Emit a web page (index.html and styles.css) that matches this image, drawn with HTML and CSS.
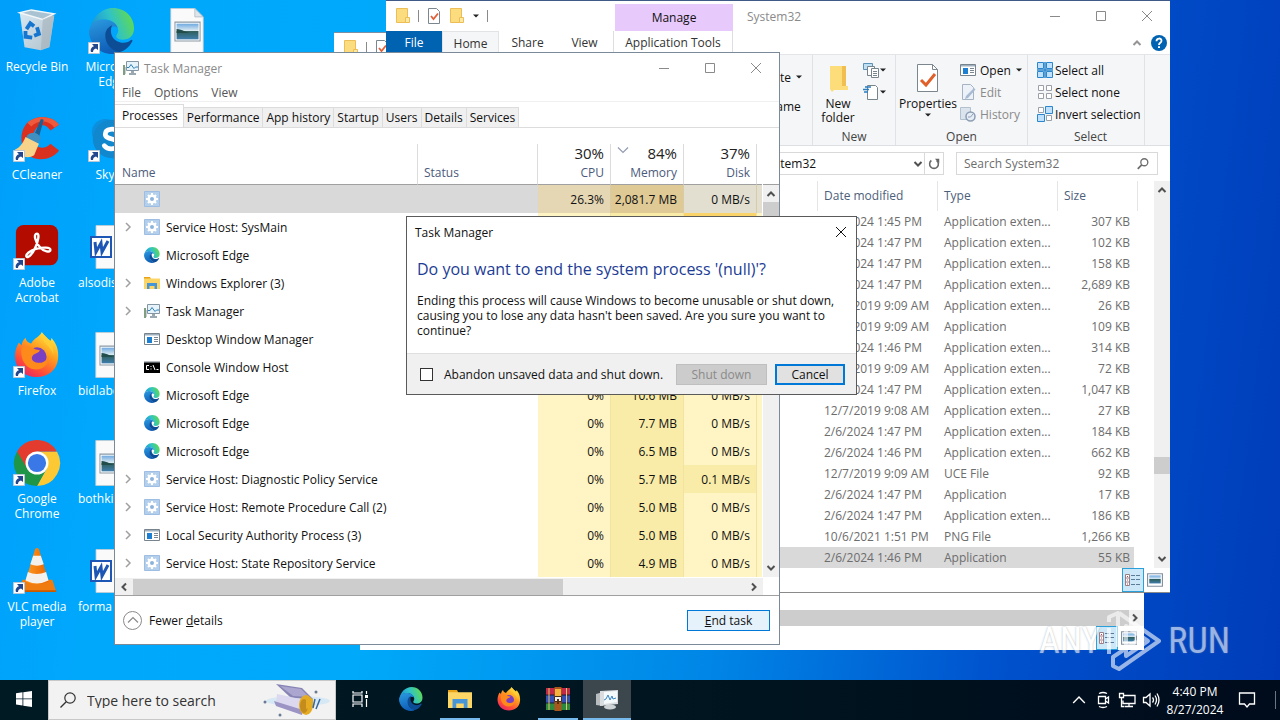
FILE: index.html
```
<!DOCTYPE html>
<html lang="en">
  <head>
    <meta charset="UTF-8" />
    <meta name="viewport" content="width=device-width, initial-scale=1" />
    <title>Task Manager</title>
    <link rel="stylesheet" href="styles.css">
  </head>
  <body>
    <!-- icon sprite -->
    <svg class="sprite" aria-hidden="true">
      <defs>
        <linearGradient id="g_edge_top" x1="0" y1="0.6" x2="1" y2="0.3">
          <stop offset="0" stop-color="#1b8fd6" /><stop offset="0.5" stop-color="#2fc2c8" /><stop offset="1" stop-color="#62dc4c" />
        </linearGradient>
        <linearGradient id="g_edge_left" x1="0" y1="0" x2="0.3" y2="1">
          <stop offset="0" stop-color="#2b9be0" /><stop offset="1" stop-color="#0f5fb8" />
        </linearGradient>
        <linearGradient id="g_fox" x1="0.8" y1="0" x2="0.2" y2="1">
          <stop offset="0" stop-color="#fff044" /><stop offset="0.4" stop-color="#ff9a1f" /><stop offset="0.75" stop-color="#ff4a3a" /><stop offset="1" stop-color="#e3206e" />
        </linearGradient>
        <linearGradient id="g_bin" x1="0" y1="0" x2="1" y2="1">
          <stop offset="0" stop-color="#e3ecf2" /><stop offset="1" stop-color="#b9c3ca" />
        </linearGradient>
        <linearGradient id="g_photo" x1="0" y1="0" x2="0" y2="1">
          <stop offset="0" stop-color="#6fa9e0" /><stop offset="0.45" stop-color="#dcebf2" /><stop offset="0.5" stop-color="#2f5f5c" /><stop offset="1" stop-color="#3f7fae" />
        </linearGradient>
        <linearGradient id="g_orange" x1="0" y1="0" x2="1" y2="0">
          <stop offset="0" stop-color="#ff9a20" /><stop offset="1" stop-color="#e86400" />
        </linearGradient>
      </defs>
      <symbol id="i_edge" viewBox="0 0 48 48">
        <path fill="url(#g_edge_top)" d="M1 23C3 10 13 0 25 0c13 0 22 10 22 21 0 8-5 12-12 12-5 0-8-2-6-5 2-3 2-6 0-9-3-5-8-7-14-7-7 0-12 5-14 11z" />
        <path fill="url(#g_edge_left)" d="M0 24c2-9 8-12 15-12 8 0 14 4 15 9-5-4-11 0-12 7-1 9 6 17 15 17-3 2-6 3-9 3C11 48 0 37 0 24z" />
        <path fill="#0d4d96" d="M17 29c0-6 3-9 7-11-3 8 0 16 9 18 5 1 9-1 11-3 1 0 2 1 1 2-3 6-8 10-13 11-8-1-15-8-15-17z" />
      </symbol>
      <symbol id="i_shortcut" viewBox="0 0 12 12">
        <path fill="#fff" stroke="#b9c7d6" d="M.5.5h11v11H.5z" />
        <path fill="#23478d" d="M4 2h6v6L8 6.500C6 7 5 8 5 10H3C2 7.500 3.500 5 6 4.300z" />
      </symbol>
      <symbol id="i_bin" viewBox="0 0 48 48">
        <path fill="url(#g_bin)" d="M6 5l36 3-5 33-9 3-17-3z" opacity="0.95" />
        <path fill="#a9c3d3" stroke="#f2f6f8" stroke-width="1.500" d="M6 5l12-3 24 4-12 6z" />
        <path fill="#a4b0b9" d="M30 12l12-5-5 33-9 4z" opacity="0.6" />
        <g fill="none" stroke="#1676cf" stroke-width="4">
          <path d="M13 22l4-6 4 3" /><path d="M24 20l2 7-5 2" /><path d="M19 31l-7-1 0-6" />
        </g>
      </symbol>
      <symbol id="i_photo_file" viewBox="0 0 32 44">
        <path fill="#fafafa" stroke="#c4ccd2" stroke-width="0.800" d="M.5.5h23l8 8v35H.5z" />
        <path fill="#dfe6ea" stroke="#b0bcc4" stroke-width="0.800" d="M23.500.5v8h8z" />
        <path fill="#fff" stroke="#8a9aa6" d="M4.500 13.500h24v18h-24z" />
        <path fill="url(#g_photo)" d="M6 15h21v15H6z" />
        <path fill="#214d4b" d="M6 20c6 0 8 4 15 4H6z" />
      </symbol>
      <symbol id="i_word_file" viewBox="0 0 48 44">
        <path fill="#fafafa" stroke="#c4ccd2" stroke-width="0.800" d="M8 .5h24l8 8v35H8z" />
        <path stroke="#9eb0c4" d="M27 14h10M27 18h10M27 22h10M27 26h10M27 30h10" />
        <path fill="#fff" stroke="#1d56b4" stroke-width="2" d="M3 12h20v20H3z" />
        <path fill="none" stroke="#1d56b4" stroke-width="3" d="M7 17l1 10 5-9 1 9 6-11" />
      </symbol>
      <symbol id="i_ccleaner" viewBox="0 0 48 48">
        <path fill="#d9301f" d="M47 9C40-1 22-1 14 7 5 16 6 34 15 41c9 7 25 5 32-5l-9-7c-5 6-13 5-16 0-3-6-2-13 2-17 5-4 10-3 14 3z" />
        <path fill="#f05a3c" d="M47 9C40-1 22-1 14 7l4 4C25 4 36 4 42 12z" />
        <path fill="#1c5f92" d="M28 3l3 1-5 18-5-2z" />
        <path fill="#3f8fc0" d="M14 20c5-4 11-3 14 3l-3 6-13-4z" />
        <path fill="#f8d38a" d="M12 22l14 7-5 12c-6 4-15 2-20-6 5-2 8-6 11-13z" />
      </symbol>
      <symbol id="i_skype" viewBox="0 0 48 48">
        <circle cx="17" cy="17" r="14" fill="#0c8fdc" /><circle cx="31" cy="31" r="14" fill="#0a7ccb" />
        <circle cx="24" cy="24" r="20" fill="#1187ce" />
        <path fill="none" stroke="#fff" stroke-width="5" stroke-linecap="round" d="M31 17c-4-5-14-4-14 2s14 4 14 10-11 7-15 2" />
      </symbol>
      <symbol id="i_acrobat" viewBox="0 0 48 48">
        <rect x="2" y="1" width="44" height="42" rx="8" fill="#b30b00" />
        <path fill="none" stroke="#fff" stroke-width="2.500" d="M24 10c-4 0-2 9 3 14 4 5 11 6 11 3s-8-3-15-1-11 6-10 8 6-2 9-9c3-6 5-15 2-15z" />
      </symbol>
      <symbol id="i_firefox" viewBox="0 0 48 48">
        <path fill="url(#g_fox)" d="M29 0c3 4 6 7 9 9 1-1 1-2 1-3 5 6 8 12 7 22C45 40 35 47 24 47 11 47 1 38 1 25c0-6 2-10 4-14l3 3c0-3 2-6 4-8 1 4 3 5 6 6 3-6 9-7 11-12z" />
        <circle cx="24" cy="26" r="10" fill="#7b3fc4" />
        <path fill="#ff8a1c" d="M8 17c4-3 10-2 14 1l5 1c-1 3-5 3-7 5-3 3-1 8 5 8 6 1 9-3 11-7 1 8-5 14-13 14C13 39 6 29 8 17z" />
        <path fill="#ffcf35" d="M29 1c8 6 13 14 12 23-1-5-5-9-8-12-3-4-5-7-4-11z" opacity="0.800" />
      </symbol>
      <symbol id="i_chrome" viewBox="0 0 48 48">
        <path fill="#fcc934" d="M34 30L24 48a24 24 0 0 0 20.800-36H24z" />
        <path fill="#1e9547" d="M3.200 12A24 24 0 0 0 24 48l10-18-10-6z" />
        <path fill="#e33b2e" d="M3.200 12A24 24 0 0 1 44.800 12H24l-10 18z" />
        <circle cx="24" cy="24" r="12" fill="#fff" /><circle cx="24" cy="24" r="9.500" fill="#3b78e7" />
      </symbol>
      <symbol id="i_vlc" viewBox="0 0 48 48">
        <path fill="#f07c10" d="M9 33h31l4 13H3z" /><path fill="#c85a00" d="M3 44h41v2H3z" />
        <path fill="url(#g_orange)" d="M22 1q2-2 4 0l10 34q-12 6-24 0z" />
        <path fill="#f4f1ec" d="M20 8h8l3 9q-7 3-14 0z" />
        <path fill="#f4f1ec" d="M14.500 25q9 4 19 0l2.500 9q-12 6-24 0z" />
      </symbol>
      <symbol id="i_gear" viewBox="0 0 16 16">
        <path fill="#b4cfec" stroke="#9dbde2" d="M.5.500h15v15H.5z" />
        <path stroke="#fff" stroke-width="2" d="M8 2v12M2 8h12M4 4l8 8M12 4l-8 8" />
        <circle cx="8" cy="8" r="4.500" fill="#fff" />
        <circle cx="8" cy="8" r="2" fill="#8db2dc" />
      </symbol>
      <symbol id="i_explorer" viewBox="0 0 16 16">
        <path fill="#e8a317" d="M0 2h6l1 2H0z" /><path fill="#fbd667" d="M0 3.500h16V14H0z" />
        <path fill="#4795d9" d="M3 8h10v6h-2.500v-3h-5v3H3z" />
      </symbol>
      <symbol id="i_taskmgr" viewBox="0 0 16 16">
        <path fill="#e6f3fb" stroke="#8496a3" d="M3.500 1.500h12v9h-12z" />
        <path fill="none" stroke="#2f81b5" d="M4 7.500h2l2-3 3 4 1.500-1.500H15" />
        <path fill="#9aa8b2" d="M8 11h3v2h2v2H6v-2h2z" /><path fill="#7f9f80" d="M0 5h2v10H0z" /><path fill="#c7cdd2" d="M2 7h1v7H2z" />
      </symbol>
      <symbol id="i_app" viewBox="0 0 16 16">
        <path fill="#fff" stroke="#77838d" d="M.5 2.500h15v11H.5z" /><path fill="#9fb0bc" d="M1 3h14v1.500H1z" />
        <path fill="#1c7fd2" d="M3 6h5v6H3z" /><path stroke="#7a8790" d="M10 6.500h4M10 8.500h4M10 10.500h4" />
      </symbol>
      <symbol id="i_console" viewBox="0 0 16 16">
        <path fill="#000" d="M0 2h16v12H0z" /><path fill="#b9bec2" d="M0 2h16v1.500H0z" />
        <path fill="none" stroke="#fff" d="M5 6.500H2.500v4H5M7 7v1M7 9.500v1M9 6l2 5M12.500 10.500h2" />
      </symbol>
      <symbol id="i_chev_right" viewBox="0 0 12 12"><path fill="none" stroke="#a0a0a0" stroke-width="1.500" d="M4 2l4 4-4 4" /></symbol>
      <symbol id="i_arrow" viewBox="0 0 12 12"><path fill="none" stroke="#505050" stroke-width="2" d="M2.500 8L6 4.500 9.500 8" /></symbol>
      <symbol id="i_arrow_thin" viewBox="0 0 12 12"><path fill="none" stroke="currentColor" stroke-width="1.200" d="M1 8.500L6 3.500 11 8.500" /></symbol>
      <symbol id="i_min" viewBox="0 0 12 12"><path stroke="currentColor" d="M1 6.500h10" /></symbol>
      <symbol id="i_max" viewBox="0 0 12 12"><path fill="none" stroke="currentColor" d="M1.500 1.500h9v9h-9z" /></symbol>
      <symbol id="i_close" viewBox="0 0 12 12"><path stroke="currentColor" d="M1 1l10 10M11 1L1 11" /></symbol>
      <symbol id="i_caret" viewBox="0 0 8 8"><path fill="#222" d="M1 2.500h6L4 5.500z" /></symbol>
      <symbol id="i_qa_folder" viewBox="0 0 16 16"><path fill="#fbdc7e" stroke="#edbe55" d="M1.500.5h11v14h-11z" /><path fill="#fde9a6" stroke="#edbe55" d="M10.500 9.500h4v5h-4z" /></symbol>
      <symbol id="i_qa_check" viewBox="0 0 16 16"><path fill="#fff" stroke="#7b868e" d="M2.500.5h8l3 3v12h-11z" /><path fill="none" stroke="#e0603a" stroke-width="1.800" d="M5 8l2.500 3L12 5.500" /></symbol>
      <symbol id="i_big_folder" viewBox="0 0 24 30"><path fill="#f0bf4f" d="M8 3h12v20H6z" /><path fill="#fddc7a" d="M4 3h12v20h6v4H8l-2 2-2-3z" /></symbol>
      <symbol id="i_big_check" viewBox="0 0 24 30"><path fill="#fff" stroke="#7b868e" d="M1.500 1.500h15l5 5v22h-20z" /><path fill="none" stroke="#7b868e" d="M16.500 1.500v5h5" /><path fill="none" stroke="#e0602a" stroke-width="3" d="M5 17l5 5 9-11" /></symbol>
      <symbol id="i_new_item" viewBox="0 0 16 16"><path fill="#bfe0f5" stroke="#5d91b5" d="M.5 1.500h9v6h-9z" /><path fill="#fff" stroke="#78848c" d="M4.500 4.500h7v9h-7z" /><path fill="#fff" stroke="#78848c" d="M8.500 6.500h7v9h-7z" /><path stroke="#78848c" d="M10 9.500h4M10 11.500h4M10 13.500h4" /></symbol>
      <symbol id="i_easy" viewBox="0 0 16 16"><path fill="#fff" stroke="#78848c" d="M4.500 1.500h8l2 2v12h-10z" /><path stroke="#2a7ec4" stroke-width="1.500" d="M2 3h6M0 5.500h6M1 8h4" /></symbol>
      <symbol id="i_edit" viewBox="0 0 16 16"><path fill="#edf2f8" stroke="#a6b3c2" d="M2.500.5h8l3 3v12h-11z" /><path fill="#a9bbd3" d="M14 4l1.500 1.500L8 14l-3 1 1-3z" /></symbol>
      <symbol id="i_history" viewBox="0 0 16 16"><path fill="#dbe3ed" stroke="#b3c0cf" d="M.5 1.500h10v12H.5z" /><circle cx="10.500" cy="10.500" r="4.500" fill="#e6edf5" stroke="#8c9db4" stroke-width="1.500" /><path fill="none" stroke="#8c9db4" d="M10.500 11l2.500-3M10.500 11H8" /></symbol>
      <symbol id="i_sel_all" viewBox="0 0 16 16"><path fill="#bfe1fb" stroke="#2b86cd" d="M.5.5h6v6h-6zM9.500.5h6v6h-6zM.5 9.500h6v6h-6zM9.500 9.500h6v6h-6z" /><path stroke="#2b86cd" stroke-width="1.500" d="M8 0v16M0 8h16" /></symbol>
      <symbol id="i_sel_none" viewBox="0 0 16 16"><path fill="#fff" stroke="#9aa0a5" d="M1.500 1.500h5v5h-5zM9.500 1.500h5v5h-5zM1.500 9.500h5v5h-5zM9.500 9.500h5v5h-5z" /></symbol>
      <symbol id="i_sel_inv" viewBox="0 0 16 16"><path fill="#fff" stroke="#9aa0a5" d="M1.500 1.500h5v5h-5zM9.500 9.500h5v5h-5z" /><path fill="#bfe1fb" stroke="#2b86cd" d="M8.500.5h7v7h-7zM.5 8.500h7v7h-7z" /></symbol>
      <symbol id="i_search" viewBox="0 0 16 16"><circle cx="9.500" cy="6" r="4" fill="none" stroke="currentColor" stroke-width="1.500" /><path stroke="currentColor" stroke-width="2" d="M6.500 9L2 13.500" /></symbol>
      <symbol id="i_search_thin" viewBox="0 0 16 16"><circle cx="10" cy="6" r="5.200" fill="none" stroke="currentColor" stroke-width="1.200" /><path stroke="currentColor" stroke-width="1.300" d="M6.200 9.800L.5 15.500" /></symbol>
      <symbol id="i_refresh" viewBox="0 0 16 16"><path fill="none" stroke="#666" stroke-width="1.800" d="M5 4a5 5 0 1 0 6 0" /><path fill="#666" d="M9 2h5v5z" /></symbol>
      <symbol id="i_help" viewBox="0 0 16 16"><circle cx="8" cy="8" r="8" fill="#0063b1" /><path fill="none" stroke="#fff" stroke-width="1.800" d="M5.500 6.200c0-3.500 5-3.500 5-.4C10.500 8 8 7.600 8 10" /><path fill="#fff" d="M7 11.200h2v1.800H7z" /></symbol>
      <symbol id="i_view_list" viewBox="0 0 16 14"><path fill="#fff" stroke="#9a7f86" d="M.5 1.500h4v11h-4zM.5 5h4M.5 9h4" /><path stroke="#5b7b96" stroke-dasharray="4 1" d="M6 2.500h10M6 6.500h10M6 11.500h10" /><path fill="#c34242" d="M2 3h1v1H2zM2 6.500h1v1H2zM2 10.500h1v1H2z" /></symbol>
      <symbol id="i_view_pic" viewBox="0 0 14 12"><path fill="#fff" stroke="#8391a0" d="M.5.5h13v11H.5z" /><path fill="url(#g_photo)" d="M2 2h10v7H2z" /></symbol>
      <symbol id="i_start" viewBox="0 0 16 16"><path fill="#fff" d="M0 2.200l6.500-.9v6.200H0zM7.300 1.200L16 0v7.500H7.300zM0 8.300h6.500v6.200L0 13.600zM7.300 8.300H16V16l-8.700-1.200z" /></symbol>
      <symbol id="i_taskview" viewBox="0 0 18 18"><path fill="none" stroke="#fff" stroke-width="1.200" d="M2 5h9v7H2zM2 1v2h9V1M2 17v-3h9v3M15.500 1v3M15.500 9v8" /><path fill="#fff" d="M14 5h3v3h-3z" /></symbol>
      <symbol id="i_winrar" viewBox="0 0 24 24"><path fill="#c02a48" d="M0 1h24v7H0z" /><path fill="#3551b5" d="M0 8h24v8H0z" /><path fill="#2c8a3e" d="M0 16h24v7H0z" /><path stroke="#1c1c30" d="M0 8h24M0 16h24" /><path stroke="#e4c66c" d="M3 1v22M20.500 1v22" /><path fill="#a8561c" d="M8.500 0h7v24h-7z" /><path fill="#f3b23c" d="M9 2h6v8H9z" /><path fill="#eee" stroke="#4a2a10" d="M8.500 9.500h7v5h-7z" /><path fill="#553010" d="M11 12h2v5h-2z" /></symbol>
      <symbol id="i_tm_bar" viewBox="0 0 24 24"><path fill="#b8bdbf" d="M1 7l7-2v14l-7-1z" /><path fill="#d9dddf" d="M5 4l18-1v14l-18 2z" /><path fill="#f4f9fc" d="M9 5l13-1v11l-13 2z" /><path fill="none" stroke="#3a86c4" d="M9 13l2-1 2-4 2 5 2-4 1 3 3-1" /><ellipse cx="15" cy="20" rx="6" ry="2.500" fill="#cdd2d5" /></symbol>
      <symbol id="i_satellite" viewBox="0 0 68 34">
        <ellipse cx="35" cy="18" rx="32" ry="5" fill="#c4e1f6" opacity="0.600" />
        <path fill="#8784b4" d="M13 1l26 4 11 11-22-1z" /><path fill="#aaa6cf" d="M17 3l21 3 8 8-16-1z" />
        <path fill="#dcd8ef" d="M14 11l28 6-2 13-27-9z" /><path fill="#9b94c4" d="M11 18l29 9-1 5-26-9z" />
        <ellipse cx="43" cy="22" rx="7" ry="10" fill="#e5ab22" /><ellipse cx="41" cy="23" rx="4" ry="7" fill="#c48c1c" />
        <path fill="#e5ab22" d="M43 14l7 2v8l-7 2z" /><path stroke="#34679f" stroke-width="1.500" d="M52 16l-2 9M57 16l-4 10" />
        <circle cx="2" cy="19" r="1.500" fill="#697a95" /><circle cx="17" cy="32" r="1.500" fill="#697a95" /><circle cx="53" cy="9" r="1.500" fill="#697a95" />
      </symbol>
      <symbol id="i_camera" viewBox="0 0 18 18"><path fill="none" stroke="#fff" stroke-width="1.300" d="M4.500 5.500h7v7h-7zM11.500 8l3-2v6l-3-2M5 2.500q4-2 8 0M5 15.500q4 2 8 0" /></symbol>
      <symbol id="i_network" viewBox="0 0 18 18"><path fill="none" stroke="#fff" stroke-width="1.300" d="M6 4.500h11v8H5v-3M11 12.500v3M7 15.500h8M1.500 2.500h4v4h-4zM3.500 6.500v9h3" /></symbol>
      <symbol id="i_volume" viewBox="0 0 18 18"><path fill="none" stroke="#fff" stroke-width="1.300" d="M1.500 6.500h2.500L8 3v12l-4-3.500H1.500zM10.500 6.500q2 2.500 0 5M13 4.500q3 4.500 0 9M15 2.500q4 6.500 0 13" /></symbol>
      <symbol id="i_note" viewBox="0 0 18 18"><path fill="none" stroke="#fff" stroke-width="1.300" d="M1.500 2h15v11h-5L9 16l-2.500-3h-5z" /></symbol>
    </svg>

    <main class="desktop">
      <ul class="shortcuts">
        <li class="shortcut"><svg class="shortcut__icon"><use href="#i_bin" /></svg><span>Recycle Bin</span></li>
        <li class="shortcut"><svg class="shortcut__icon"><use href="#i_ccleaner" /></svg><svg class="shortcut__arrow"><use href="#i_shortcut" /></svg><span>CCleaner</span></li>
        <li class="shortcut"><svg class="shortcut__icon"><use href="#i_acrobat" /></svg><svg class="shortcut__arrow"><use href="#i_shortcut" /></svg><span>Adobe<br />Acrobat</span></li>
        <li class="shortcut"><svg class="shortcut__icon"><use href="#i_firefox" /></svg><svg class="shortcut__arrow"><use href="#i_shortcut" /></svg><span>Firefox</span></li>
        <li class="shortcut"><svg class="shortcut__icon"><use href="#i_chrome" /></svg><svg class="shortcut__arrow"><use href="#i_shortcut" /></svg><span>Google<br />Chrome</span></li>
        <li class="shortcut"><svg class="shortcut__icon"><use href="#i_vlc" /></svg><svg class="shortcut__arrow"><use href="#i_shortcut" /></svg><span>VLC media<br />player</span></li>
        <li class="shortcut"><svg class="shortcut__icon"><use href="#i_edge" /></svg><svg class="shortcut__arrow"><use href="#i_shortcut" /></svg><span>Microsoft<br />Edge</span></li>
        <li class="shortcut"><svg class="shortcut__icon"><use href="#i_skype" /></svg><svg class="shortcut__arrow"><use href="#i_shortcut" /></svg><span>Skype</span></li>
        <li class="shortcut shortcut--file"><svg class="shortcut__icon"><use href="#i_word_file" /></svg><span>alsodis</span></li>
        <li class="shortcut shortcut--file"><svg class="shortcut__icon"><use href="#i_photo_file" /></svg><span>bidlabe</span></li>
        <li class="shortcut shortcut--file"><svg class="shortcut__icon"><use href="#i_photo_file" /></svg><span>bothki</span></li>
        <li class="shortcut shortcut--file"><svg class="shortcut__icon"><use href="#i_word_file" /></svg><span>forma</span></li>
        <li class="shortcut"><svg class="shortcut__icon"><use href="#i_photo_file" /></svg></li>
      </ul>

      <!-- windows in the background -->
      <section class="window window--back1">
        <div class="quick_access">
          <svg class="icon16"><use href="#i_qa_folder" /></svg><i class="quick_access__bar"></i>
          <svg class="icon16"><use href="#i_qa_check" /></svg>
        </div>
      </section>
      <section class="window window--back2">
        <div class="scroll_h"><span class="scroll_h__thumb"></span><svg class="scroll__arrow scroll__arrow--right"><use href="#i_arrow" /></svg></div>
        <div class="view_switch">
          <button class="view_switch__button view_switch__button--on" aria-label="Details"><svg class="view_icon"><use href="#i_view_list" /></svg></button>
          <button class="view_switch__button" aria-label="Large icons"><svg class="view_icon"><use href="#i_view_pic" /></svg></button>
        </div>
      </section>

      <!-- Explorer -->
      <section class="window explorer">
        <header class="explorer__title">
          <div class="quick_access">
            <svg class="icon16"><use href="#i_qa_folder" /></svg><i class="quick_access__bar"></i>
            <svg class="icon16"><use href="#i_qa_check" /></svg>
            <svg class="icon16"><use href="#i_qa_folder" /></svg>
            <svg class="caret"><use href="#i_caret" /></svg><i class="quick_access__bar"></i>
          </div>
          <span class="explorer__manage">Manage</span>
          <h2 class="explorer__name">System32</h2>
          <div class="caption">
            <button aria-label="Minimize"><svg><use href="#i_min" /></svg></button>
            <button aria-label="Maximize"><svg><use href="#i_max" /></svg></button>
            <button aria-label="Close"><svg><use href="#i_close" /></svg></button>
          </div>
        </header>
        <nav class="ribbon_tabs">
          <button class="ribbon_tabs__tab ribbon_tabs__tab--file">File</button>
          <button class="ribbon_tabs__tab ribbon_tabs__tab--on">Home</button>
          <button class="ribbon_tabs__tab">Share</button>
          <button class="ribbon_tabs__tab">View</button>
          <button class="ribbon_tabs__tab ribbon_tabs__tab--tools">Application Tools</button>
          <div class="ribbon_tabs__end">
            <svg class="scroll__arrow scroll__arrow--thin"><use href="#i_arrow" /></svg>
            <svg class="icon16"><use href="#i_help" /></svg>
          </div>
        </nav>
        <div class="ribbon">
          <div class="ribbon__group ribbon__group--organize">
            <div class="ribbon__stack">
              <button class="ribbon__small">Delete <svg class="caret"><use href="#i_caret" /></svg></button>
              <button class="ribbon__small">Rename</button>
            </div>
          </div>
          <div class="ribbon__group ribbon__group--new">
            <div class="ribbon__body">
              <button class="ribbon__big"><svg><use href="#i_big_folder" /></svg>New<br />folder</button>
              <div class="ribbon__col">
                <button class="ribbon__small ribbon__small--icon" aria-label="New item"><svg class="icon16"><use href="#i_new_item" /></svg><svg class="caret"><use href="#i_caret" /></svg></button>
                <button class="ribbon__small ribbon__small--icon" aria-label="Easy access"><svg class="icon16"><use href="#i_easy" /></svg><svg class="caret"><use href="#i_caret" /></svg></button>
              </div>
            </div>
            <p class="ribbon__label">New</p>
          </div>
          <div class="ribbon__group ribbon__group--open">
            <div class="ribbon__body">
              <button class="ribbon__big"><svg><use href="#i_big_check" /></svg>Properties<svg class="caret"><use href="#i_caret" /></svg></button>
              <div class="ribbon__col">
                <button class="ribbon__small"><svg class="icon16"><use href="#i_app" /></svg>Open <svg class="caret"><use href="#i_caret" /></svg></button>
                <button class="ribbon__small" disabled><svg class="icon16"><use href="#i_edit" /></svg>Edit</button>
                <button class="ribbon__small" disabled><svg class="icon16"><use href="#i_history" /></svg>History</button>
              </div>
            </div>
            <p class="ribbon__label">Open</p>
          </div>
          <div class="ribbon__group ribbon__group--select">
            <div class="ribbon__body">
              <div class="ribbon__col">
                <button class="ribbon__small"><svg class="icon16"><use href="#i_sel_all" /></svg>Select all</button>
                <button class="ribbon__small"><svg class="icon16"><use href="#i_sel_none" /></svg>Select none</button>
                <button class="ribbon__small"><svg class="icon16"><use href="#i_sel_inv" /></svg>Invert selection</button>
              </div>
            </div>
            <p class="ribbon__label">Select</p>
          </div>
        </div>
        <div class="address">
          <div class="address__path">
            <span class="address__text">System32</span>
            <svg class="scroll__arrow scroll__arrow--down"><use href="#i_arrow" /></svg>
            <button class="address__refresh" aria-label="Refresh"><svg class="icon14"><use href="#i_refresh" /></svg></button>
          </div>
          <label class="address__search">
            <input type="text" placeholder="Search System32" aria-label="Search System32" />
            <svg class="icon14"><use href="#i_search" /></svg>
          </label>
        </div>
        <div class="files">
          <table class="files__table">
            <thead>
              <tr><th></th><th class="files__date">Date modified</th><th class="files__type">Type</th><th class="files__size">Size</th></tr>
            </thead>
            <tbody>
              <tr><td></td><td>2/6/2024 1:45 PM</td><td>Application exten...</td><td>307 KB</td></tr>
              <tr><td></td><td>2/6/2024 1:47 PM</td><td>Application exten...</td><td>102 KB</td></tr>
              <tr><td></td><td>2/6/2024 1:47 PM</td><td>Application exten...</td><td>158 KB</td></tr>
              <tr><td></td><td>2/6/2024 1:47 PM</td><td>Application exten...</td><td>2,689 KB</td></tr>
              <tr><td></td><td>12/7/2019 9:09 AM</td><td>Application exten...</td><td>26 KB</td></tr>
              <tr><td></td><td>12/7/2019 9:09 AM</td><td>Application</td><td>109 KB</td></tr>
              <tr><td></td><td>2/6/2024 1:46 PM</td><td>Application exten...</td><td>314 KB</td></tr>
              <tr><td></td><td>12/7/2019 9:09 AM</td><td>Application exten...</td><td>72 KB</td></tr>
              <tr><td></td><td>2/6/2024 1:47 PM</td><td>Application exten...</td><td>1,047 KB</td></tr>
              <tr><td></td><td>12/7/2019 9:08 AM</td><td>Application exten...</td><td>27 KB</td></tr>
              <tr><td></td><td>2/6/2024 1:47 PM</td><td>Application exten...</td><td>184 KB</td></tr>
              <tr><td></td><td>2/6/2024 1:46 PM</td><td>Application exten...</td><td>662 KB</td></tr>
              <tr><td></td><td>12/7/2019 9:09 AM</td><td>UCE File</td><td>92 KB</td></tr>
              <tr><td></td><td>2/6/2024 1:47 PM</td><td>Application</td><td>17 KB</td></tr>
              <tr><td></td><td>2/6/2024 1:47 PM</td><td>Application exten...</td><td>186 KB</td></tr>
              <tr><td></td><td>10/6/2021 1:51 PM</td><td>PNG File</td><td>1,266 KB</td></tr>
              <tr class="files__selected"><td></td><td>2/6/2024 1:46 PM</td><td>Application</td><td>55 KB</td></tr>
            </tbody>
          </table>
          <div class="scroll_v scroll_v--files">
            <svg class="scroll__arrow"><use href="#i_arrow" /></svg>
            <span class="scroll_v__thumb"></span>
            <svg class="scroll__arrow scroll__arrow--down"><use href="#i_arrow" /></svg>
          </div>
        </div>
        <div class="view_switch">
          <button class="view_switch__button view_switch__button--on" aria-label="Details"><svg class="view_icon"><use href="#i_view_list" /></svg></button>
          <button class="view_switch__button" aria-label="Large icons"><svg class="view_icon"><use href="#i_view_pic" /></svg></button>
        </div>
      </section>

      <!-- Task Manager -->
      <section class="window taskmgr">
        <header class="taskmgr__title">
          <svg class="icon16"><use href="#i_taskmgr" /></svg>
          <h1 class="taskmgr__name">Task Manager</h1>
          <div class="caption">
            <button aria-label="Minimize"><svg><use href="#i_min" /></svg></button>
            <button aria-label="Maximize"><svg><use href="#i_max" /></svg></button>
            <button aria-label="Close"><svg><use href="#i_close" /></svg></button>
          </div>
        </header>
        <nav class="menu"><button>File</button><button>Options</button><button>View</button></nav>
        <nav class="tabs">
          <button class="tabs__tab tabs__tab--on">Processes</button>
          <button class="tabs__tab">Performance</button>
          <button class="tabs__tab">App history</button>
          <button class="tabs__tab">Startup</button>
          <button class="tabs__tab">Users</button>
          <button class="tabs__tab">Details</button>
          <button class="tabs__tab">Services</button>
        </nav>
        <div class="processes">
          <table class="processes__table">
            <colgroup><col /><col class="col_status" /><col class="col_value" /><col class="col_value" /><col class="col_value" /><col class="col_rest" /></colgroup>
            <thead>
              <tr>
                <th>Name</th>
                <th>Status</th>
                <th><strong>30%</strong>CPU</th>
                <th><svg class="sort"><use href="#i_arrow_thin" /></svg><strong>84%</strong>Memory</th>
                <th><strong>37%</strong>Disk</th>
                <th></th>
              </tr>
            </thead>
            <tbody>
              <tr class="processes__selected"><td><div class="proc"><i class="proc__open"></i><svg class="icon16"><use href="#i_gear" /></svg></div></td><td></td><td>26.3%</td><td>2,081.7 MB</td><td>0 MB/s</td><td></td></tr>
              <tr><td><div class="proc"><svg class="proc__open"><use href="#i_chev_right" /></svg><svg class="icon16"><use href="#i_gear" /></svg>Service Host: SysMain</div></td><td></td><td></td><td></td><td class="heat3"></td><td></td></tr>
              <tr><td><div class="proc"><i class="proc__open"></i><svg class="icon16"><use href="#i_edge" /></svg>Microsoft Edge</div></td><td></td><td></td><td></td><td></td><td></td></tr>
              <tr><td><div class="proc"><svg class="proc__open"><use href="#i_chev_right" /></svg><svg class="icon16"><use href="#i_explorer" /></svg>Windows Explorer (3)</div></td><td></td><td></td><td></td><td></td><td></td></tr>
              <tr><td><div class="proc"><svg class="proc__open"><use href="#i_chev_right" /></svg><svg class="icon16"><use href="#i_taskmgr" /></svg>Task Manager</div></td><td></td><td></td><td></td><td></td><td></td></tr>
              <tr><td><div class="proc"><i class="proc__open"></i><svg class="icon16"><use href="#i_app" /></svg>Desktop Window Manager</div></td><td></td><td></td><td></td><td></td><td></td></tr>
              <tr><td><div class="proc"><i class="proc__open"></i><svg class="icon16"><use href="#i_console" /></svg>Console Window Host</div></td><td></td><td></td><td></td><td></td><td></td></tr>
              <tr><td><div class="proc"><i class="proc__open"></i><svg class="icon16"><use href="#i_edge" /></svg>Microsoft Edge</div></td><td></td><td>0%</td><td>10.6 MB</td><td>0 MB/s</td><td></td></tr>
              <tr><td><div class="proc"><i class="proc__open"></i><svg class="icon16"><use href="#i_edge" /></svg>Microsoft Edge</div></td><td></td><td>0%</td><td>7.7 MB</td><td>0 MB/s</td><td></td></tr>
              <tr><td><div class="proc"><i class="proc__open"></i><svg class="icon16"><use href="#i_edge" /></svg>Microsoft Edge</div></td><td></td><td>0%</td><td>6.5 MB</td><td>0 MB/s</td><td></td></tr>
              <tr><td><div class="proc"><svg class="proc__open"><use href="#i_chev_right" /></svg><svg class="icon16"><use href="#i_gear" /></svg>Service Host: Diagnostic Policy Service</div></td><td></td><td>0%</td><td>5.7 MB</td><td class="heat2">0.1 MB/s</td><td></td></tr>
              <tr><td><div class="proc"><svg class="proc__open"><use href="#i_chev_right" /></svg><svg class="icon16"><use href="#i_gear" /></svg>Service Host: Remote Procedure Call (2)</div></td><td></td><td>0%</td><td>5.0 MB</td><td>0 MB/s</td><td></td></tr>
              <tr><td><div class="proc"><svg class="proc__open"><use href="#i_chev_right" /></svg><svg class="icon16"><use href="#i_app" /></svg>Local Security Authority Process (3)</div></td><td></td><td>0%</td><td>5.0 MB</td><td>0 MB/s</td><td></td></tr>
              <tr><td><div class="proc"><svg class="proc__open"><use href="#i_chev_right" /></svg><svg class="icon16"><use href="#i_gear" /></svg>Service Host: State Repository Service</div></td><td></td><td>0%</td><td>4.9 MB</td><td>0 MB/s</td><td></td></tr>
            </tbody>
          </table>
          <div class="scroll_v scroll_v--processes">
            <svg class="scroll__arrow"><use href="#i_arrow" /></svg>
            <span class="scroll_v__thumb"></span>
            <svg class="scroll__arrow scroll__arrow--down"><use href="#i_arrow" /></svg>
          </div>
        </div>
        <div class="scroll_h scroll_h--processes">
          <svg class="scroll__arrow scroll__arrow--left"><use href="#i_arrow" /></svg>
          <span class="scroll_h__thumb"></span>
          <svg class="scroll__arrow scroll__arrow--right"><use href="#i_arrow" /></svg>
        </div>
        <footer class="taskmgr__footer">
          <button class="fewer"><span class="fewer__circle"><svg class="scroll__arrow"><use href="#i_arrow_thin" /></svg></span><span>Fewer <u>d</u>etails</span></button>
          <button class="button button--hot"><span><u>E</u>nd task</span></button>
        </footer>
      </section>

      <!-- confirm dialog -->
      <section class="dialog" role="dialog" aria-labelledby="dialog_question">
        <header class="dialog__title">
          <span>Task Manager</span>
          <button class="dialog__close" aria-label="Close"><svg><use href="#i_close" /></svg></button>
        </header>
        <div class="dialog__body">
          <h2 id="dialog_question" class="dialog__question">Do you want to end the system process '(null)'?</h2>
          <p class="dialog__text">Ending this process will cause Windows to become unusable or shut down,<br />causing you to lose any data hasn't been saved. Are you sure you want to<br />continue?</p>
        </div>
        <footer class="dialog__footer">
          <label class="dialog__check"><input type="checkbox" />Abandon unsaved data and shut down.</label>
          <button class="button button--shutdown" disabled>Shut down</button>
          <button class="button button--focus">Cancel</button>
        </footer>
      </section>

      <div class="watermark">
        <span>ANY</span>
        <svg viewBox="0 0 58 62"><g fill="none" stroke="#fff" stroke-width="4" stroke-linejoin="round"><path d="M4 12v-5l9-4v34M4 18v26" /><path d="M14 3l40 28L14 59l-6-3 0-9 24-16" /><path d="M21 16v30l22-15z" /></g></svg>
        <span>RUN</span>
      </div>
    </main>

    <footer class="taskbar">
      <button class="taskbar__button" aria-label="Start"><svg class="icon16"><use href="#i_start" /></svg></button>
      <label class="taskbar__search">
        <svg class="taskbar__search_icon"><use href="#i_search_thin" /></svg>
        <input type="text" placeholder="Type here to search" aria-label="Type here to search" />
        <svg class="taskbar__art"><use href="#i_satellite" /></svg>
      </label>
      <button class="taskbar__button" aria-label="Task View"><svg class="icon18"><use href="#i_taskview" /></svg></button>
      <div class="taskbar__apps">
        <button class="taskbar__button" aria-label="Microsoft Edge"><svg class="icon24"><use href="#i_edge" /></svg></button>
        <button class="taskbar__button taskbar__button--open" aria-label="File Explorer"><svg class="icon24"><use href="#i_explorer" /></svg></button>
        <button class="taskbar__button" aria-label="Firefox"><svg class="icon24"><use href="#i_firefox" /></svg></button>
        <button class="taskbar__button taskbar__button--open" aria-label="WinRAR"><svg class="icon24"><use href="#i_winrar" /></svg></button>
        <button class="taskbar__button taskbar__button--active" aria-label="Task Manager"><svg class="icon24"><use href="#i_tm_bar" /></svg></button>
      </div>
      <div class="tray">
        <button aria-label="Show hidden icons"><svg class="icon14"><use href="#i_arrow_thin" /></svg></button>
        <button aria-label="Camera"><svg class="icon18"><use href="#i_camera" /></svg></button>
        <button aria-label="Network"><svg class="icon18"><use href="#i_network" /></svg></button>
        <button aria-label="Volume"><svg class="icon18"><use href="#i_volume" /></svg></button>
        <p class="tray__clock"><time>4:40 PM</time><time>8/27/2024</time></p>
        <button class="tray__note" aria-label="Notifications"><svg class="icon18"><use href="#i_note" /></svg></button>
      </div>
    </footer>
  </body>
</html>
```
FILE: styles.css
```
:root {
  --color-text: #111;
  --color-gray: #f0f0f0;
  --color-thumb: #cdcdcd;
  --color-blue: #0078d7;
  font-family: 'Open Sans', 'Noto Sans', sans-serif;
  font-size: 12px;
  line-height: 15px;
  color: var(--color-text);
}
* {
  margin: 0;
  padding: 0;
  box-sizing: border-box;
}
body {
  display: flex;
  flex-direction: column;
  height: 100vh;
  overflow: hidden;
}
button,
input {
  border: none;
  background: none;
  font: inherit;
  color: inherit;
}
svg {
  display: block;
  flex: none;
}
h1,
h2 {
  font-size: 12px;
  font-weight: 400;
}
table {
  border-spacing: 0;
  table-layout: fixed;
}
th {
  font-weight: 400;
  text-align: left;
}
.sprite {
  position: absolute;
  width: 0;
  height: 0;
}
.icon14 {
  width: 14px;
  height: 14px;
}
.icon16 {
  width: 16px;
  height: 16px;
}
.icon18 {
  width: 18px;
  height: 18px;
}
.icon24 {
  width: 24px;
  height: 24px;
}
.caret {
  width: 8px;
  height: 8px;
}
/* desktop */
.desktop {
  position: relative;
  flex: 1;
  overflow: hidden;
  background: linear-gradient(97deg, #009ffa 0%, #00a8fc 12%, #00a9fa 32%, #0086e6 58%, #0050cc 80%, #003cb9 100%);
}
.shortcuts {
  display: grid;
  grid-template-rows: repeat(6, 108px);
  grid-auto-flow: column;
  grid-auto-columns: 75px;
  list-style: none;
}
.shortcut {
  position: relative;
  display: flex;
  flex-direction: column;
  align-items: center;
  padding: 8px 4px 0 3px;
  text-align: center;
  color: #fff;
}
.shortcut__icon {
  width: 48px;
  height: 46px;
  margin-bottom: 5px;
}
.shortcut__arrow {
  position: absolute;
  left: 13px;
  top: 42px;
  width: 12px;
  height: 12px;
}
.shortcut--file {
  align-items: flex-start;
}
.shortcut--file .shortcut__icon {
  margin-left: 10px;
}
/* window frame */
.window {
  position: absolute;
  display: flex;
  flex-direction: column;
  background-color: #fff;
}
.window--back1 {
  left: 334px;
  top: 32px;
  right: 162px;
  bottom: 100px;
  border-top: 1px solid #7d8ea0;
}
.window--back2 {
  left: 360px;
  top: 80px;
  right: 136px;
  bottom: 30px;
  justify-content: flex-end;
}
.caption {
  display: flex;
  align-self: stretch;
  margin-left: auto;
  color: #8a8a8a;
}
.caption button {
  display: flex;
  align-items: center;
  justify-content: center;
  width: 46px;
}
.caption svg {
  width: 12px;
  height: 12px;
}
.quick_access {
  display: flex;
  align-items: center;
  gap: 7px;
  height: 30px;
  padding-left: 9px;
}
.quick_access__bar {
  width: 1px;
  height: 12px;
  background-color: #8a8a8a;
}
/* scrollbars */
.scroll__arrow {
  width: 12px;
  height: 12px;
}
.scroll__arrow--down {
  transform: rotate(180deg);
}
.scroll__arrow--left {
  transform: rotate(-90deg);
}
.scroll__arrow--right {
  transform: rotate(90deg);
}
.scroll__arrow--thin {
  opacity: 0.6;
}
.scroll_v {
  display: flex;
  flex-direction: column;
  align-items: center;
  width: 16px;
  padding: 3px 0;
  background-color: var(--color-gray);
}
.scroll_v__thumb {
  width: 16px;
  background-color: var(--color-thumb);
}
.scroll_v .scroll__arrow--down {
  margin-top: auto;
}
.scroll_h {
  display: flex;
  align-items: center;
  height: 16px;
  padding: 0 3px;
  background-color: var(--color-gray);
}
.scroll_h__thumb {
  flex: 1;
  height: 16px;
  background-color: var(--color-thumb);
}
.scroll_h .scroll__arrow--right {
  margin-left: auto;
}
.view_switch {
  display: flex;
  justify-content: flex-end;
  height: 24px;
  padding-right: 4px;
}
.view_switch__button {
  display: flex;
  align-items: center;
  justify-content: center;
  width: 22px;
}
.view_switch__button--on {
  border: 1px solid #2aa0da;
  background-color: #cce8f8;
}
.view_icon {
  width: 16px;
  height: 14px;
}
/* Explorer */
.explorer {
  left: 386px;
  top: 0;
  right: 110px;
  border-top: 1px solid #405a88;
  border-bottom: 1px solid #8a8a8a;
}
.explorer__title {
  display: flex;
  align-items: center;
  height: 30px;
}
.explorer__title .quick_access {
  width: 229px;
}
.explorer__manage {
  display: flex;
  align-items: center;
  justify-content: center;
  align-self: flex-end;
  width: 118px;
  height: 27px;
  background-color: #e8c9fb;
}
.explorer__name {
  margin-left: 14px;
  color: #8a8a8a;
}
.ribbon_tabs {
  display: flex;
  height: 23px;
}
.ribbon_tabs__tab {
  width: 57px;
  color: #333;
}
.ribbon_tabs__tab--file {
  width: 56px;
  background-color: #0063b1;
  color: #fff;
}
.ribbon_tabs__tab--on {
  border: 1px solid #e1e3e5;
  border-bottom: none;
  background-color: #f5f6f7;
}
.ribbon_tabs__tab--tools {
  width: 120px;
  border: solid #e0dce4;
  border-width: 0 1px;
}
.ribbon_tabs__end {
  display: flex;
  align-items: center;
  gap: 8px;
  margin-left: auto;
  padding-right: 3px;
}
.ribbon {
  display: flex;
  justify-content: flex-end;
  height: 92px;
  padding-right: 25px;
  border-top: 1px solid #e3e5e8;
  border-bottom: 1px solid #dcdfe3;
  background-color: #f5f6f7;
}
.ribbon__group {
  display: flex;
  flex-direction: column;
  justify-content: space-between;
  padding: 4px 0 1px;
  border-right: 1px solid #e0e2e5;
}
.ribbon__group--organize {
  padding-top: 11px;
  padding-right: 9px;
}
.ribbon__group--new {
  width: 83px;
}
.ribbon__group--open {
  width: 132px;
}
.ribbon__group--select {
  width: 117px;
  padding-left: 9px;
}
.ribbon__stack {
  display: flex;
  flex-direction: column;
  gap: 7px;
}
.ribbon__body {
  display: flex;
}
.ribbon__col {
  display: flex;
  flex-direction: column;
}
.ribbon__small {
  display: flex;
  align-items: center;
  gap: 4px;
  height: 22px;
  white-space: nowrap;
}
.ribbon__small--icon {
  gap: 0;
}
.ribbon__group--select .ribbon__small {
  gap: 2px;
}
.ribbon__small:disabled {
  color: #8a8a8a;
}
.ribbon__big {
  display: flex;
  flex-direction: column;
  align-items: center;
  width: 50px;
  line-height: 14px;
}
.ribbon__big svg:first-child {
  width: 24px;
  height: 30px;
  margin: 4px 0;
}
.ribbon__group--open .ribbon__big {
  width: 64px;
}
.ribbon__label {
  text-align: center;
  color: #444;
}
.address {
  display: flex;
  gap: 12px;
  height: 35px;
  padding: 6px 12px 6px 0;
}
.address__path {
  display: flex;
  align-items: center;
  flex: 1;
  border: 1px solid #d9d9d9;
}
.address__text {
  flex: 1;
  padding-left: 375px;
}
.address__refresh {
  display: flex;
  align-items: center;
  align-self: stretch;
  padding: 0 2px;
  border-left: 1px solid #d9d9d9;
}
.address__search {
  display: flex;
  align-items: center;
  width: 202px;
  padding: 0 7px;
  border: 1px solid #d9d9d9;
  color: #6d6d6d;
}
.address__search input {
  flex: 1;
  min-width: 0;
}
input::placeholder {
  color: inherit;
  opacity: 1;
}
.files {
  display: flex;
  justify-content: space-between;
}
.files__table {
  flex: 1;
  margin-right: 16px;
  color: #6d6d6d;
}
.files__table th {
  height: 30px;
  padding: 0 0 2px 6px;
  border-right: 1px solid #e5e5e5;
  color: #4c607a;
}
.files__date {
  width: 120px;
}
.files__type {
  width: 120px;
}
.files__size {
  width: 80px;
}
.files__table td {
  height: 21px;
  padding-left: 6px;
  white-space: nowrap;
}
.files__table td:last-child {
  padding: 0 4px 0 0;
  border-right: 4px solid #fff;
  text-align: right;
}
.files__selected {
  background-color: #d9d9d9;
}
.scroll_v--files .scroll_v__thumb {
  height: 17px;
  margin-top: auto;
}
.scroll_v--files .scroll__arrow--down {
  margin-top: 79px;
}
/* Task Manager */
.taskmgr {
  left: 114px;
  top: 52px;
  right: 500px;
  border: 1px solid #7a8a99;
}
.taskmgr__title {
  display: flex;
  align-items: center;
  gap: 5px;
  height: 30px;
  padding-left: 8px;
}
.taskmgr__name {
  color: #8a8a8a;
}
.menu {
  display: flex;
  gap: 13px;
  height: 19px;
  padding-left: 7px;
  border-bottom: 1px solid var(--color-gray);
  color: #555;
}
.tabs {
  display: flex;
  align-items: flex-end;
  height: 26px;
  border-bottom: 1px solid #dcdcdc;
}
.tabs__tab {
  height: 20px;
  padding: 0 3px;
  border: solid #dcdcdc;
  border-width: 1px 1px 0 0;
  background-color: var(--color-gray);
}
.tabs__tab--on {
  height: 23px;
  padding: 0 5px 2px 7px;
  background-color: #fff;
}
.processes {
  display: flex;
  padding-top: 16px;
}
.processes__table {
  flex: 1;
  margin-right: 1px;
}
.col_status {
  width: 120px;
}
.col_value {
  width: 73px;
}
.col_rest {
  width: 5px;
}
.processes__table th {
  height: 41px;
  padding: 0 6px 4px;
  border-right: 1px solid #dcdcdc;
  border-bottom: 1px solid #a0a0a0;
  vertical-align: bottom;
  color: #4c5a7c;
}
.processes__table th:first-child {
  padding-left: 7px;
}
.processes__table th:last-child {
  padding: 0;
  border-right: none;
}
.processes__table th:nth-child(n + 3) {
  text-align: right;
}
.processes__table strong {
  display: block;
  margin-bottom: 3px;
  font-size: 15px;
  font-weight: 400;
  line-height: 18px;
  color: #222;
}
.sort {
  float: left;
  width: 12px;
  height: 12px;
  transform: rotate(180deg);
  opacity: 0.6;
}
.processes__table td {
  height: 28px;
}
.processes__table td:nth-child(n + 3) {
  padding-right: 6px;
  border-right: 1px solid #f3e2a0;
  background-color: #fff4c4;
  text-align: right;
  white-space: nowrap;
}
.processes__table td:nth-child(4) {
  background-color: #f9eca8;
}
.processes__table td:last-child {
  padding: 0;
  border-right: none;
}
.processes__table td.heat2 {
  background-color: #f9eca8;
}
.processes__table td.heat3 {
  background-color: #fbd36b;
}
.processes__selected td {
  background-color: #d9d9d9;
}
.processes__table .processes__selected td:nth-child(n + 3) {
  border-color: #d8cba8;
  background-color: #e5d6b4;
}
.processes__table .processes__selected td:nth-child(4) {
  background-color: #dfca96;
}
.processes__table .processes__selected td:nth-child(n + 5) {
  background-color: #e2dfd0;
}
.proc {
  display: flex;
  align-items: center;
  gap: 6px;
  padding-left: 7px;
  white-space: nowrap;
}
.proc__open {
  width: 12px;
  height: 12px;
  margin-right: 4px;
}
.scroll_v--processes {
  margin-top: 40px;
  border-top: 1px solid #a0a0a0;
}
.scroll_v--processes .scroll_v__thumb {
  height: 50px;
  margin-top: 2px;
}
.scroll_h--processes {
  height: 17px;
  margin-top: 1px;
  margin-right: 16px;
}
.scroll_h--processes .scroll_h__thumb {
  flex: 0 1 67%;
  margin-left: 3px;
}
.taskmgr__footer {
  display: flex;
  align-items: center;
  justify-content: space-between;
  height: 49px;
  padding: 0 9px 0 8px;
  border-top: 1px solid #a0a0a0;
}
.fewer {
  display: flex;
  align-items: center;
  gap: 7px;
}
.fewer__circle {
  display: flex;
  align-items: center;
  justify-content: center;
  width: 19px;
  height: 19px;
  border: 1px solid #8a8a8a;
  border-radius: 50%;
  color: #8a8a8a;
}
.button {
  height: 21px;
  border: 1px solid #adadad;
  background-color: #e1e1e1;
}
.button--hot {
  width: 83px;
  border-color: var(--color-blue);
  background-color: #e5f1fb;
}
.button--focus {
  width: 70px;
  border: 2px solid var(--color-blue);
}
.button--shutdown {
  width: 91px;
  border-color: #bfbfbf;
  background-color: #ccc;
  color: #8a8a8a;
}
/* dialog */
.dialog {
  position: absolute;
  left: 406px;
  top: 216px;
  width: 451px;
  border: 1px solid #5a5a5a;
  background-color: #fff;
}
.dialog__title {
  display: flex;
  align-items: center;
  justify-content: space-between;
  height: 30px;
  padding: 0 9px 0 8px;
}
.dialog__close svg {
  width: 12px;
  height: 12px;
}
.dialog__body {
  padding: 12px 10px 15px;
}
.dialog__question {
  margin-bottom: 14px;
  font-size: 16px;
  line-height: 20px;
  color: #1c3c96;
}
.dialog__text {
  white-space: nowrap;
}
.dialog__footer {
  display: flex;
  align-items: center;
  gap: 8px;
  height: 41px;
  padding: 0 11px 0 13px;
  border-top: 1px solid #dfdfdf;
  background-color: var(--color-gray);
}
.dialog__check {
  display: flex;
  align-items: center;
  gap: 11px;
  margin-right: auto;
}
.dialog__check input {
  width: 13px;
  height: 13px;
  border: 1px solid #333;
  background-color: #fff;
  appearance: none;
}
.watermark {
  position: absolute;
  right: 50px;
  bottom: 8px;
  display: flex;
  align-items: center;
  gap: 5px;
  font-family: 'Liberation Sans Narrow', 'Roboto Condensed', Roboto, sans-serif;
  font-size: 36px;
  font-weight: 400;
  line-height: 40px;
  color: #fff;
  opacity: 0.6;
  text-shadow: 0 0 2px #7c8a99;
}
.watermark svg {
  width: 58px;
  height: 62px;
}
/* taskbar */
.taskbar {
  display: flex;
  height: 40px;
  background: linear-gradient(90deg, #001a24, #00141f 60%, #000b1c);
}
.taskbar__button {
  display: flex;
  align-items: center;
  justify-content: center;
  width: 48px;
  border-bottom: 2px solid transparent;
}
.taskbar__apps {
  display: flex;
  gap: 1px;
  margin-left: 3px;
}
.taskbar__button--open {
  width: 40px;
  margin: 0 4px;
  border-color: #76b9ed;
}
.taskbar__button--active {
  border-color: #76b9ed;
  background-color: #3b464d;
}
.taskbar__search {
  display: flex;
  align-items: center;
  width: 288px;
  padding: 0 4px 0 11px;
  border: 1px solid #c8c8c8;
  background-color: #f2f2f2;
  font-size: 14px;
  color: #333;
}
.taskbar__search input {
  flex: 1;
  min-width: 0;
  padding-left: 11px;
}
.taskbar__search_icon {
  width: 16px;
  height: 16px;
}
.taskbar__art {
  width: 68px;
  height: 34px;
}
.tray {
  display: flex;
  align-items: center;
  margin-left: auto;
  padding-right: 4px;
  color: #fff;
}
.tray button {
  display: flex;
  justify-content: center;
  width: 24px;
}
.tray__clock {
  display: flex;
  flex-direction: column;
  gap: 3px;
  width: 64px;
  text-align: center;
}
.tray .tray__note {
  width: 49px;
  padding-right: 8px;
  border-right: 1px solid #6d7680;
}
```
